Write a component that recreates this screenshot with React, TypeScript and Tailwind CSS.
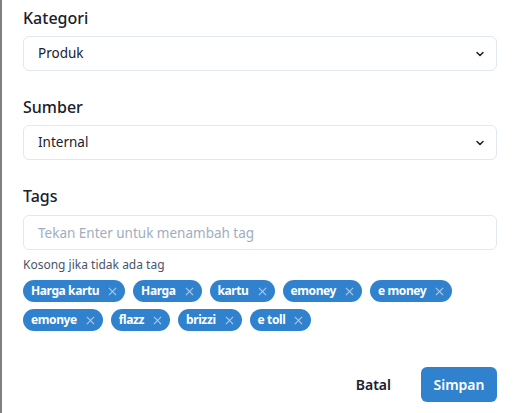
import React, { useState } from "react";

const font = { fontFamily: '"Noto Sans", "Open Sans", sans-serif' };

const initialTags = ["Harga kartu", "Harga", "kartu", "emoney", "e money", "emonye", "flazz", "brizzi", "e toll"];

function Chevron() {
  return (
    <svg width="12" height="12" viewBox="0 0 24 24" fill="none" stroke="#1a202c" strokeWidth="3" strokeLinecap="round" strokeLinejoin="round">
      <polyline points="6 9 12 15 18 9" />
    </svg>
  );
}

function SelectBox({ value }: { value: string }) {
  return (
    <div className="flex h-[35px] items-center justify-between rounded-md border border-[#e2e8f0] bg-white pl-[14px] pr-[10px] text-[13.5px] text-[#1a202c]">
      <span>{value}</span>
      <Chevron />
    </div>
  );
}

export default function App() {
  const [tags, setTags] = useState(initialTags);
  const [text, setText] = useState("");

  return (
    <div style={font} className="h-[413px] w-[520px] border-l-2 border-[#808080] bg-white pl-[21px] pr-[23px] pt-[6px] text-[#1a202c]">
      <label className="mb-1.5 block h-6 text-[16px] font-medium leading-6">Kategori</label>
      <SelectBox value="Produk" />

      <label className="mb-1.5 mt-6 block h-6 text-[16px] font-medium leading-6">Sumber</label>
      <SelectBox value="Internal" />

      <label className="mb-[7px] mt-6 block h-6 text-[16px] font-medium leading-6">Tags</label>
      <input
        className="h-[35px] w-full rounded-md border border-[#e2e8f0] pl-[14px] text-[13.5px] outline-none placeholder:text-[#a0aec0]"
        placeholder="Tekan Enter untuk menambah tag"
        value={text}
        onChange={(e) => setText(e.target.value)}
        onKeyDown={(e) => {
          if (e.key === "Enter" && text.trim()) {
            setTags([...tags, text.trim()]);
            setText("");
          }
        }}
      />
      <p className="mt-[7px] text-[12px] leading-4 text-[#4a5568]">Kosong jika tidak ada tag</p>

      <div className="mt-[7px] flex flex-wrap gap-x-2 gap-y-[7px]">
        {tags.map((t, i) => (
          <span key={i} className="flex h-[22px] items-center rounded-full bg-[#3182ce] pl-2 pr-2 text-[12px] font-bold text-white">
            <span className="tracking-[-0.4px]">{t}</span>
            <button className="ml-[9px] flex items-center opacity-60" onClick={() => setTags(tags.filter((_, j) => j !== i))}>
              <svg width="9" height="9" viewBox="0 0 10 10" stroke="white" strokeWidth="1.2">
                <line x1="1" y1="1" x2="9" y2="9" />
                <line x1="9" y1="1" x2="1" y2="9" />
              </svg>
            </button>
          </span>
        ))}
      </div>

      <div className="mt-9 flex items-center justify-end">
        <button className="mr-[14px] h-[35px] px-4 text-[14px] font-semibold text-[#1a202c]">Batal</button>
        <button className="h-[35px] w-[76px] rounded-md bg-[#3182ce] text-[14px] font-semibold text-white">Simpan</button>
      </div>
    </div>
  );
}
